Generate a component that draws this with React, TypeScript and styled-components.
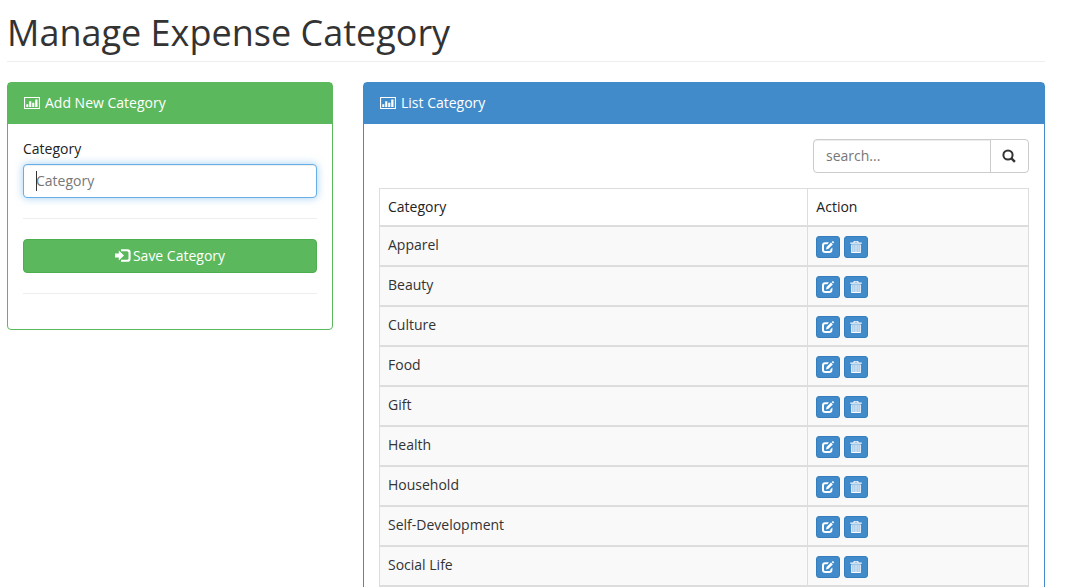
import React from 'react';
import styled, { createGlobalStyle } from 'styled-components';

const GlobalStyle = createGlobalStyle`
  *, *::before, *::after { box-sizing: border-box; }
  body {
    margin: 0;
    background: #fff;
    color: #333;
    font-family: "Open Sans", "Noto Sans", sans-serif;
    font-size: 14px;
    line-height: 20px;
  }
  button, input { font: inherit; }
`;

const Page = styled.main`
  padding: 12px 20px 20px 7px;
`;

const PageTitle = styled.h1`
  margin: 0 0 20px;
  padding-bottom: 8px;
  border-bottom: 1px solid #eee;
  font-size: 36px;
  line-height: 41px;
  font-weight: 400;
`;

const Columns = styled.div`
  display: grid;
  grid-template-columns: repeat(12, 1fr);
  gap: 30px;
  align-items: start;
`;

const Panel = styled.section<{ $span: number; $color: string }>`
  grid-column: span ${(p) => p.$span};
  border: 1px solid ${(p) => p.$color};
  border-radius: 4px;
  background: #fff;

  & > header {
    background: ${(p) => p.$color};
  }
`;

const PanelHeader = styled.header`
  display: flex;
  align-items: center;
  gap: 5px;
  padding: 10px 16px 11px;
  color: #fff;

  h2 {
    margin: 0;
    font-size: 14px;
    line-height: 20px;
    font-weight: 500;
  }
`;

const PanelBody = styled.div`
  padding: 15px;
`;

const Label = styled.label`
  display: block;
  margin-bottom: 5px;
  color: #222;
  font-weight: 500;
`;

const Field = styled.div`
  position: relative;
`;

const Caret = styled.span`
  position: absolute;
  left: 13px;
  top: 7px;
  width: 1px;
  height: 20px;
  background: #333;
`;

const TextInput = styled.input<{ $active?: boolean }>`
  display: block;
  width: 100%;
  min-width: 0;
  height: 34px;
  padding: 5px 12px 7px;
  border: 1px solid ${(p) => (p.$active ? '#66afe9' : '#ccc')};
  border-radius: 4px;
  outline: 0;
  background: #fff;
  color: #555;
  box-shadow: inset 0 1px 1px rgba(0, 0, 0, 0.075)
    ${(p) => (p.$active ? ', 0 0 8px rgba(102, 175, 233, 0.6)' : '')};

  &::placeholder { color: #777; opacity: 1; }
`;

const Divider = styled.hr`
  margin: 20px 0;
  border: 0;
  border-top: 1px solid #eee;
`;

const SaveButton = styled.button`
  display: flex;
  align-items: center;
  justify-content: center;
  gap: 2px;
  width: 100%;
  height: 34px;
  border: 1px solid #4cae4c;
  border-radius: 4px;
  background: #5cb85c;
  color: #fff;
  font-weight: 500;
  cursor: pointer;
`;

const SearchGroup = styled.form`
  display: flex;
  max-width: 216px;
  margin: 0 0 15px auto;

  input { border-radius: 4px 0 0 4px; }
`;

const SearchButton = styled.button`
  display: flex;
  flex: none;
  align-items: center;
  justify-content: center;
  width: 39px;
  margin-left: -1px;
  padding: 0;
  border: 1px solid #ccc;
  border-radius: 0 4px 4px 0;
  background: #fff;
  color: #333;
  cursor: pointer;
`;

const Table = styled.table`
  width: 100%;
  border-collapse: collapse;
  table-layout: fixed;

  th, td {
    padding: 8px;
    border: 1px solid #ddd;
    border-bottom-width: 2px;
    text-align: left;
    vertical-align: top;
  }
  th { color: #222; font-weight: 500; }
  th:last-child { width: 34%; }
  tbody tr { background: #f9f9f9; }
`;

const Actions = styled.div`
  display: flex;
  gap: 4px;
  padding-top: 1px;
  height: 22px;
`;

const IconButton = styled.button`
  display: flex;
  flex: none;
  align-items: center;
  justify-content: center;
  width: 24px;
  height: 22px;
  padding: 0;
  border: 1px solid #357ebd;
  border-radius: 3px;
  background: #428bca;
  color: #fff;
  cursor: pointer;
`;

const ChartIcon = () => (
  <svg width="16" height="12" viewBox="0 0 16 12" fill="none" aria-hidden="true">
    <rect x="0.5" y="0.5" width="15" height="11" rx="0.5" stroke="currentColor" strokeWidth="1.2" />
    <path fill="currentColor" d="M2.300 7.200h2V10h-2zM5.200 4.200h2.100V10H5.200zM8.200 5.700h2.100V10H8.200zM11.200 2.400h2.300V10h-2.300z" />
  </svg>
);

const LoginIcon = () => (
  <svg width="16" height="14" viewBox="0 0 16 14" fill="currentColor" aria-hidden="true">
    <path d="M0 4.600h3.800V1.600L9 6.500l-5.200 4.900V8.400H0z" />
    <path d="M6 .2h6.500Q15.600 .2 15.600 3.300v6.400q0 3.100-3.100 3.100H6v-2h6q1.500 0 1.500-1.500V3.700q0-1.500-1.500-1.500H6z" />
  </svg>
);

const SearchIcon = () => (
  <svg width="15" height="14" viewBox="0 0 15 14" fill="none" stroke="currentColor" aria-hidden="true">
    <circle cx="6" cy="6" r="4.600" strokeWidth="2" />
    <path d="M9.200 9.200 12.900 12.800" strokeWidth="2.400" />
  </svg>
);

const EditIcon = () => (
  <svg width="12" height="12" viewBox="0 0 12 12" fill="currentColor" aria-hidden="true">
    <path d="M7 1.200H3.200Q0 1.200 0 4.400v4.400Q0 12 3.200 12h4Q10.400 12 10.400 8.800V6.600L8.400 8.400v.6q0 1-1 1H3.100q-1.100 0-1.100-1.100V4.400q0-1.200 1.100-1.200h2.300z" />
    <path d="M4 8.500 4.600 5.900 9 1.600l1.800 1.800-4.300 4.300zM9.600 1.100 10.600.2q.3-.3.6 0l.8.8q.3.3 0 .6l-.9 1z" />
  </svg>
);

const TrashIcon = () => (
  <svg width="12" height="12" viewBox="0 0 12 12" fill="currentColor" aria-hidden="true">
    <path fillRule="evenodd" d="M.3 1.400h3.200V.8q0-.8.8-.8h3.400q.8 0 .8.800v.6h3.200v1.300H.3zM4.500.8v.6h3V.8z" />
    <path
      fillRule="evenodd"
      d="M1.200 3.400h9.600V12H1.200zM2.600 4.100v6.900h.7V4.100zM4.600 4.100v6.900h.7V4.100zM6.700 4.100v6.900h.7V4.100zM8.700 4.100v6.900h.7V4.100z"
    />
  </svg>
);

const categories = [
  'Apparel',
  'Beauty',
  'Culture',
  'Food',
  'Gift',
  'Health',
  'Household',
  'Self-Development',
  'Social Life',
];

export default function App() {
  return (
    <>
      <GlobalStyle />
      <Page>
        <PageTitle>Manage Expense Category</PageTitle>
        <Columns>
          <Panel $span={4} $color="#5cb85c">
            <PanelHeader>
              <ChartIcon />
              <h2>Add New Category</h2>
            </PanelHeader>
            <PanelBody>
              <Label htmlFor="category">Category</Label>
              <Field>
                <TextInput id="category" type="text" placeholder="Category" $active />
                <Caret />
              </Field>
              <Divider />
              <SaveButton type="button">
                <LoginIcon />
                Save Category
              </SaveButton>
              <Divider />
            </PanelBody>
          </Panel>

          <Panel $span={8} $color="#428bca">
            <PanelHeader>
              <ChartIcon />
              <h2>List Category</h2>
            </PanelHeader>
            <PanelBody>
              <SearchGroup role="search" onSubmit={(e) => e.preventDefault()}>
                <TextInput type="text" placeholder="search..." aria-label="Search categories" />
                <SearchButton type="submit" aria-label="Search">
                  <SearchIcon />
                </SearchButton>
              </SearchGroup>
              <Table>
                <thead>
                  <tr>
                    <th scope="col">Category</th>
                    <th scope="col">Action</th>
                  </tr>
                </thead>
                <tbody>
                  {categories.map((name) => (
                    <tr key={name}>
                      <td>{name}</td>
                      <td>
                        <Actions>
                          <IconButton type="button" aria-label={`Edit ${name}`}>
                            <EditIcon />
                          </IconButton>
                          <IconButton type="button" aria-label={`Delete ${name}`}>
                            <TrashIcon />
                          </IconButton>
                        </Actions>
                      </td>
                    </tr>
                  ))}
                </tbody>
              </Table>
            </PanelBody>
          </Panel>
        </Columns>
      </Page>
    </>
  );
}
